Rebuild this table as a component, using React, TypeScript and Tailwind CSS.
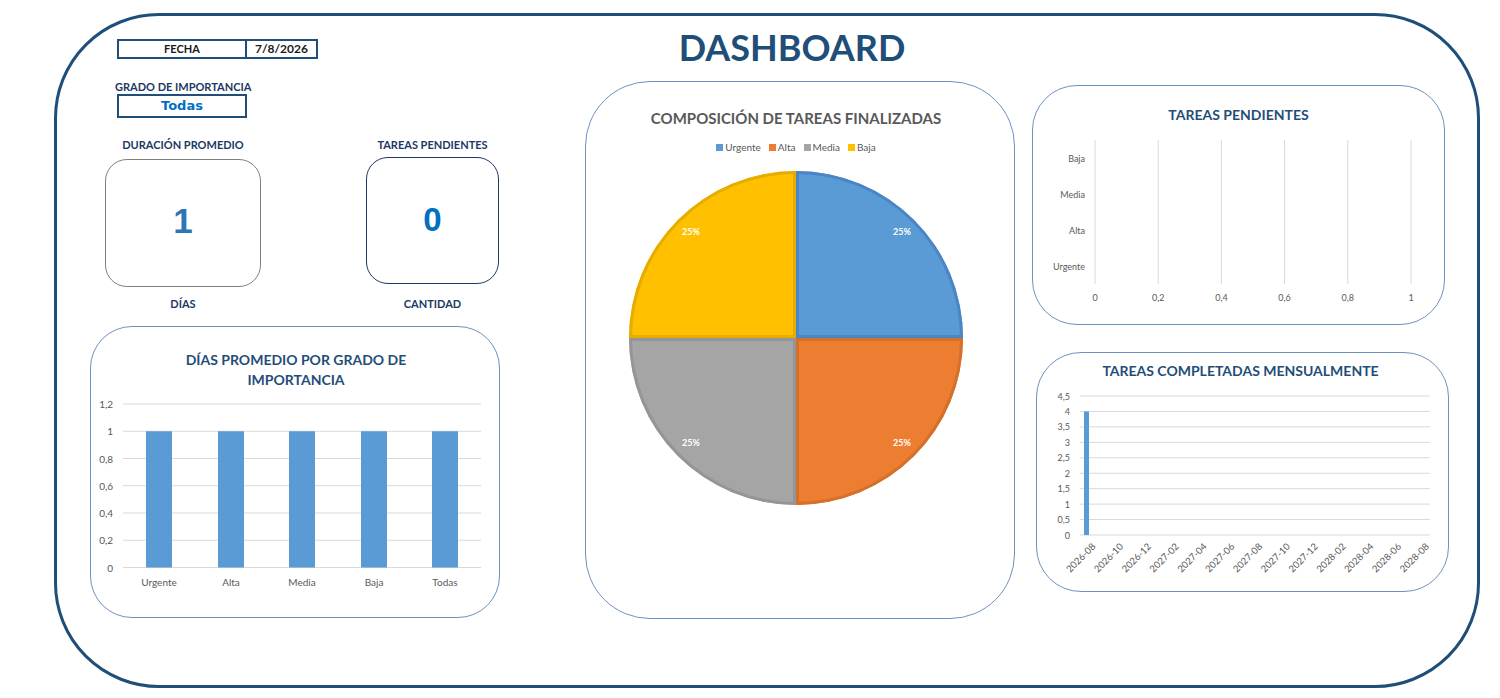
import React from "react";

const FONT = { fontFamily: "Lato, 'Open Sans', sans-serif" };
const GRAY = "#595959";
const GRID = "#d9d9d9";

function BarChart() {
  const y0 = 567.5;
  const step = 27.25;
  const ticks = ["0", "0,2", "0,4", "0,6", "0,8", "1", "1,2"];
  const cats = ["Urgente", "Alta", "Media", "Baja", "Todas"];
  const xs = [159, 231, 302, 374, 445];
  return (
    <svg width={408} height={226} viewBox="91 390 408 226" className="block">
      {ticks.map((t, i) => (
        <g key={t}>
          <line x1={123} x2={481} y1={y0 - i * step} y2={y0 - i * step} stroke={GRID} strokeWidth={1} />
          <text x={113} y={y0 - i * step} textAnchor="end" dominantBaseline="central" fontSize={10} fill={GRAY} style={FONT}>
            {t}
          </text>
        </g>
      ))}
      {xs.map((x, i) => (
        <g key={cats[i]}>
          <rect x={x - 13} y={y0 - 5 * step} width={26} height={5 * step} fill="#5b9bd5" />
          <text x={x} y={582} textAnchor="middle" dominantBaseline="central" fontSize={10} fill={GRAY} style={FONT}>
            {cats[i]}
          </text>
        </g>
      ))}
    </svg>
  );
}

function PieChart() {
  const cx = 796;
  const cy = 338;
  const r = 167;
  const slices = [
    { id: "s1", d: `M${cx},${cy} L${cx},${cy - r} A${r},${r} 0 0 1 ${cx + r},${cy} Z`, fill: "#5b9bd5", stroke: "#4a86c5" },
    { id: "s2", d: `M${cx},${cy} L${cx + r},${cy} A${r},${r} 0 0 1 ${cx},${cy + r} Z`, fill: "#ed7d31", stroke: "#d2702c" },
    { id: "s3", d: `M${cx},${cy} L${cx},${cy + r} A${r},${r} 0 0 1 ${cx - r},${cy} Z`, fill: "#a5a5a5", stroke: "#959595" },
    { id: "s4", d: `M${cx},${cy} L${cx - r},${cy} A${r},${r} 0 0 1 ${cx},${cy - r} Z`, fill: "#ffc000", stroke: "#e6ac00" },
  ];
  const labels: [number, number][] = [
    [902, 231],
    [902, 442],
    [691, 442],
    [691, 231],
  ];
  return (
    <svg width={428} height={384} viewBox="586 153 428 384" className="block">
      <defs>
        {slices.map((s) => (
          <clipPath id={`clip-${s.id}`} key={s.id}>
            <path d={s.d} />
          </clipPath>
        ))}
      </defs>
      {slices.map((s) => (
        <g key={s.id}>
          <path d={s.d} fill={s.fill} />
          <path d={s.d} fill="none" stroke={s.stroke} strokeWidth={6} clipPath={`url(#clip-${s.id})`} />
        </g>
      ))}
      {labels.map(([x, y], i) => (
        <text key={i} x={x} y={y} textAnchor="middle" dominantBaseline="central" fontSize={9} fontWeight={700} fill="#ffffff" style={FONT}>
          25%
        </text>
      ))}
    </svg>
  );
}

function PendingChart() {
  const xs = [1095, 1158.2, 1221.4, 1284.6, 1347.8, 1411];
  const xl = ["0", "0,2", "0,4", "0,6", "0,8", "1"];
  const cats: [string, number][] = [
    ["Baja", 158],
    ["Media", 194],
    ["Alta", 230],
    ["Urgente", 266],
  ];
  return (
    <svg width={411} height={193} viewBox="1033 125 411 193" className="block">
      {xs.map((x, i) => (
        <g key={i}>
          <line x1={x} x2={x} y1={140} y2={284} stroke={GRID} strokeWidth={1} />
          <text x={x} y={297} textAnchor="middle" dominantBaseline="central" fontSize={9} fill={GRAY} style={FONT}>
            {xl[i]}
          </text>
        </g>
      ))}
      {cats.map(([c, y]) => (
        <text key={c} x={1085} y={y} textAnchor="end" dominantBaseline="central" fontSize={9} fill={GRAY} style={FONT}>
          {c}
        </text>
      ))}
    </svg>
  );
}

function MonthlyChart() {
  const y0 = 535;
  const step = 15.44;
  const ticks = ["0", "0,5", "1", "1,5", "2", "2,5", "3", "3,5", "4", "4,5"];
  const months = [
    "2026-08",
    "2026-10",
    "2026-12",
    "2027-02",
    "2027-04",
    "2027-06",
    "2027-08",
    "2027-10",
    "2027-12",
    "2028-02",
    "2028-04",
    "2028-06",
    "2028-08",
  ];
  return (
    <svg width={411} height={205} viewBox="1037 381 411 205" className="block">
      {ticks.map((t, i) => (
        <g key={t}>
          <line x1={1080} x2={1430} y1={y0 - i * step} y2={y0 - i * step} stroke={GRID} strokeWidth={1} />
          <text x={1070} y={y0 - i * step} textAnchor="end" dominantBaseline="central" fontSize={9} fill={GRAY} style={FONT}>
            {t}
          </text>
        </g>
      ))}
      <rect x={1084} y={y0 - 8 * step} width={5} height={8 * step} fill="#5b9bd5" />
      {months.map((m, i) => {
        const x = 1091 + i * 27.8;
        const y = 542;
        return (
          <text
            key={m}
            x={x}
            y={y}
            textAnchor="end"
            dominantBaseline="hanging"
            fontSize={9.5}
            fill={GRAY}
            style={FONT}
            transform={`rotate(-45 ${x} ${y})`}
          >
            {m}
          </text>
        );
      })}
    </svg>
  );
}

export default function App() {
  return (
    <div className="w-[1500px] h-[698px] bg-white pt-[13px] pl-[54px] overflow-hidden" style={FONT}>
      <div className="w-[1426px] h-[675px] border-[3px] border-[#1f4e79] rounded-[105px] flex pl-[33px]">
        {/* Left column */}
        <div className="w-[410px] flex flex-col shrink-0">
          <div className="mt-[23px] ml-[27px] flex h-[20px] w-[201px] border-2 border-[#1f4e79] text-[11px] font-bold text-[#1a1a1a]">
            <div className="w-[128px] border-r-2 border-[#1f4e79] flex items-center justify-center">FECHA</div>
            <div className="flex-1 flex items-center justify-center text-[12px]">7/8/2026</div>
          </div>
          <div className="mt-[21px] ml-[25px] text-[11px] leading-[13px] font-bold text-[#203864]">GRADO DE IMPORTANCIA</div>
          <div
            className="mt-[1px] ml-[27px] w-[130px] h-[24px] border-2 border-[#1f4e79] flex items-center justify-center text-[13px] font-bold text-[#0070c0]"
            style={{ fontFamily: "'DejaVu Sans', sans-serif" }}
          >
            Todas
          </div>
          <div className="mt-[20px] h-[172px] flex">
            <div className="ml-[15px] w-[156px] flex flex-col items-center">
              <div className="text-[11px] leading-[13px] font-bold text-[#203864]">DURACIÓN PROMEDIO</div>
              <div className="mt-[8px] w-[156px] h-[128px] border border-[#7f7f7f] rounded-[22px] flex items-center justify-center">
                <span
                  className="text-[35px] font-bold text-[#2e75b6] leading-none mb-[6px]"
                  style={{ fontFamily: "'Liberation Sans', Arial, sans-serif" }}
                >
                  1
                </span>
              </div>
              <div className="mt-[10px] text-[11px] leading-[13px] font-bold text-[#203864]">DÍAS</div>
            </div>
            <div className="ml-[105px] w-[133px] flex flex-col items-center">
              <div className="text-[11px] leading-[13px] font-bold text-[#203864]">TAREAS PENDIENTES</div>
              <div className="mt-[6px] w-[133px] h-[127px] border border-[#203864] rounded-[22px] flex items-center justify-center">
                <span
                  className="text-[33px] font-bold text-[#0070c0] leading-none mb-[2px]"
                  style={{ fontFamily: "'Liberation Sans', Arial, sans-serif" }}
                >
                  0
                </span>
              </div>
              <div className="mt-[13px] text-[11px] leading-[13px] font-bold text-[#203864]">CANTIDAD</div>
            </div>
          </div>
          <div className="mt-[16px] w-[410px] h-[292px] border border-[#6d93c0] rounded-[42px] flex flex-col">
            <div className="pt-[23px] text-center text-[14px] leading-[20px] font-bold text-[#1f4e79] pl-[2px]">
              DÍAS PROMEDIO POR GRADO DE
              <br />
              IMPORTANCIA
            </div>
            <BarChart />
          </div>
        </div>

        {/* Middle column */}
        <div className="ml-[85px] w-[430px] flex flex-col shrink-0">
          <div className="mt-[8px] h-[46px] leading-[46px] pr-[16px] text-center text-[36px] font-bold text-[#1f4e79]">DASHBOARD</div>
          <div className="mt-[11px] w-[430px] h-[538px] border border-[#6d93c0] rounded-[65px] flex flex-col">
            <div className="pt-[26px] text-center text-[15px] leading-[20px] font-bold text-[#595959] pr-[8px]">
              COMPOSICIÓN DE TAREAS FINALIZADAS
            </div>
            <div className="mt-[13px] h-[12px] flex items-center justify-center gap-[8px] text-[10px] text-[#595959] pr-[8px]">
              <div className="flex items-center gap-[2px]">
                <span className="w-[7px] h-[7px] bg-[#5b9bd5]" />
                <span>Urgente</span>
              </div>
              <div className="flex items-center gap-[2px]">
                <span className="w-[7px] h-[7px] bg-[#ed7d31]" />
                <span>Alta</span>
              </div>
              <div className="flex items-center gap-[2px]">
                <span className="w-[7px] h-[7px] bg-[#a5a5a5]" />
                <span>Media</span>
              </div>
              <div className="flex items-center gap-[2px]">
                <span className="w-[7px] h-[7px] bg-[#ffc000]" />
                <span>Baja</span>
              </div>
            </div>
            <PieChart />
          </div>
        </div>

        {/* Right column */}
        <div className="ml-[17px] flex flex-col shrink-0">
          <div className="mt-[69px] w-[413px] h-[240px] border border-[#6d93c0] rounded-[45px] flex flex-col">
            <div className="pt-[19px] text-center text-[14px] leading-[20px] font-bold text-[#1f4e79]">TAREAS PENDIENTES</div>
            <PendingChart />
          </div>
          <div className="mt-[27px] ml-[4px] w-[413px] h-[240px] border border-[#6d93c0] rounded-[45px] flex flex-col">
            <div className="pt-[8px] text-center text-[14px] leading-[20px] font-bold text-[#1f4e79] pr-[4px]">
              TAREAS COMPLETADAS MENSUALMENTE
            </div>
            <MonthlyChart />
          </div>
        </div>
      </div>
    </div>
  );
}
